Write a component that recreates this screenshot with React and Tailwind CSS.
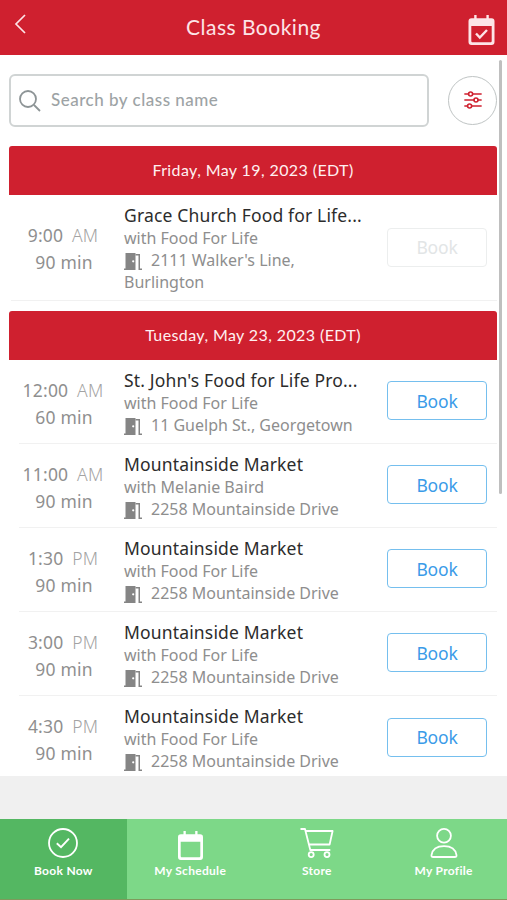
const DIAS = [
    {
        fecha: 'Friday, May 19, 2023 (EDT)',
        clases: [
            { id: 1, hora: '9:00', periodo: 'AM', duracion: '90 min', titulo: 'Grace Church Food for Life...', instructor: 'Food For Life', lugar: "2111 Walker's Line, Burlington", disponible: false },
        ],
    },
    {
        fecha: 'Tuesday, May 23, 2023 (EDT)',
        clases: [
            { id: 2, hora: '12:00', periodo: 'AM', duracion: '60 min', titulo: "St. John's Food for Life Pro...", instructor: 'Food For Life', lugar: '11 Guelph St., Georgetown', disponible: true },
            { id: 3, hora: '11:00', periodo: 'AM', duracion: '90 min', titulo: 'Mountainside Market', instructor: 'Melanie Baird', lugar: '2258 Mountainside Drive', disponible: true },
            { id: 4, hora: '1:30', periodo: 'PM', duracion: '90 min', titulo: 'Mountainside Market', instructor: 'Food For Life', lugar: '2258 Mountainside Drive', disponible: true },
            { id: 5, hora: '3:00', periodo: 'PM', duracion: '90 min', titulo: 'Mountainside Market', instructor: 'Food For Life', lugar: '2258 Mountainside Drive', disponible: true },
            { id: 6, hora: '4:30', periodo: 'PM', duracion: '90 min', titulo: 'Mountainside Market', instructor: 'Food For Life', lugar: '2258 Mountainside Drive', disponible: true },
        ],
    },
];

// --- ICONOS ---
const IconoPuerta = () => (
    <svg viewBox="0 0 18 17" className="inline-block w-[18px] h-[17px] mr-[9px] align-[-4px]" fill="#858585">
        <path fillRule="evenodd" d="M1.500 0H11.500V17H0V15.500h1.500zM9.200 7.200a1.100 1.100 0 1 0 0 2.200 1.100 1.100 0 0 0 0-2.200z" />
        <path d="M11.500 1h4.500v14.500h2V17h-3.500V2.500h-3z" />
    </svg>
);

const IconoCalendario = ({ check, className }) => (
    <svg viewBox="0 0 26 30" className={className} fill="currentColor">
        <path fillRule="evenodd" d="M5.700 0h2.400v3.300h9.800V0h2.400v3.300H23a3 3 0 0 1 3 3V27a3 3 0 0 1-3 3H3a3 3 0 0 1-3-3V6.300a3 3 0 0 1 3-3h2.700zM2.800 11v14.900c0 .8.500 1.300 1.300 1.300h17.800c.8 0 1.300-.5 1.300-1.300V11z" />
        {check && <path d="m7.500 18.500 3.800 4 7.200-7.500" fill="none" stroke="currentColor" strokeWidth="2.400" />}
    </svg>
);

const IconoFiltros = () => (
    <svg viewBox="0 0 18 18" className="w-[18px] h-[18px]" fill="none" stroke="#cf202f" strokeWidth="1.6" strokeLinecap="round">
        <path d="M.9 3h3.600M8.700 3h8.400M.9 9h9M14.200 9h2.900M.9 15h2.500M7.700 15h9.400" />
        <circle cx="6.600" cy="3" r="2" />
        <circle cx="12" cy="9" r="2" />
        <circle cx="5.600" cy="15" r="2" />
    </svg>
);

const MENU = [
    {
        nombre: 'Book Now',
        activo: true,
        icono: (
            <svg viewBox="0 0 30 30" className="w-[30px] h-[30px]" fill="none" stroke="currentColor" strokeWidth="1.8">
                <circle cx="15" cy="15" r="14" />
                <path d="m8.800 15.300 4.200 3.900 8-8.600" strokeWidth="1.900" />
            </svg>
        ),
    },
    {
        nombre: 'My Schedule',
        icono: <IconoCalendario className="w-[25px] h-[29px] mt-[3px]" />,
    },
    {
        nombre: 'Store',
        icono: (
            <svg viewBox="0 0 34 30" className="w-[34px] h-[30px]" fill="none" stroke="currentColor" strokeWidth="1.8" strokeLinejoin="round">
                <path d="M.5 1H5l5.300 21h20M5.600 3h27l-3 13.500H9" />
                <circle cx="11.200" cy="26.600" r="2.500" />
                <circle cx="27" cy="26.600" r="2.500" />
            </svg>
        ),
    },
    {
        nombre: 'My Profile',
        icono: (
            <svg viewBox="0 0 28 30" className="w-[28px] h-[30px]" fill="none" stroke="currentColor" strokeWidth="1.8" strokeLinejoin="round">
                <circle cx="14" cy="7.800" r="6.900" />
                <path d="M3.200 29C1.900 29 1.300 28.400 1.500 27.200 2.400 21.500 7 18.200 14 18.200s11.600 3.300 12.500 9c.2 1.200-.4 1.800-1.700 1.800z" />
            </svg>
        ),
    },
];

const Clase = ({ clase, ultima }) => (
    <div className={`flex pt-2 ${clase.disponible ? 'ml-[10px] h-[84.1px]' : 'ml-[2px] h-[106px]'} ${ultima ? '' : 'border-b border-[#f1f1f1]'}`}>
        {/* Horario */}
        <div className={`shrink-0 text-center text-[17.5px] leading-[27px] tracking-[0.2px] text-[#8f8f8f] ${clase.disponible ? 'w-[90px] pt-[8.5px]' : 'w-[106px] pt-[18.5px]'}`}>
            <div className="-ml-[2px] whitespace-nowrap">{clase.hora} <span className="ml-1 font-light text-[#a3a3a3]">{clase.periodo}</span></div>
            <div>{clase.duracion}</div>
        </div>

        {/* Detalle */}
        <div className={`w-[240px] shrink-0 text-[16px] leading-[22px] text-[#8e8e8e] ${clase.disponible ? 'ml-[15px]' : 'ml-[7px]'}`}>
            <h3 className="text-[17.5px] leading-[24px] tracking-[0.16px] text-[#2c2c2c] whitespace-nowrap">{clase.titulo}</h3>
            <p>with {clase.instructor}</p>
            <p className="w-[235px]"><IconoPuerta />{clase.lugar}</p>
        </div>

        <button
            disabled={!clase.disponible}
            className={`ml-[23px] h-[39px] w-[100px] shrink-0 rounded-[4px] border text-[17.5px] tracking-[-0.2px] ${clase.disponible ? 'mt-[13.2px] border-[#75bfee] text-[#3a9be8]' : 'mt-[25px] border-[#eceeee] text-[#e2e5e6]'}`}
        >
            Book
        </button>
    </div>
);

const App = () => {
    return (
        <div className="relative flex h-[900px] w-[507px] flex-col overflow-hidden bg-[#f0f0f0] font-['Noto_Sans',sans-serif]">
            {/* Encabezado */}
            <header className="flex h-[55px] shrink-0 items-center justify-between bg-[#cf202f] pl-[14px] pr-[12px] text-[#fde4e7]">
                <svg viewBox="0 0 12 20" className="mb-[7px] mr-[13px] w-[12px] h-[20px]" fill="none" stroke="currentColor" strokeWidth="1.7">
                    <path d="M11 1 2 10l9 9" />
                </svg>
                <h1 className="mb-[1px] font-['Lato',sans-serif] text-[21px] tracking-[0.5px]">Class Booking</h1>
                <IconoCalendario check className="mt-[4px] w-[27px] h-[30px]" />
            </header>

            <main className="h-[721px] shrink-0 overflow-hidden bg-white pl-[9px] pr-[10px]">
                {/* Buscador */}
                <div className="flex items-center justify-between pt-[19px]">
                    <label className="flex h-[53px] w-[420px] items-center rounded-[6px] border-2 border-[#d0d4d4] pl-[8px]">
                        <svg viewBox="0 0 22 22" className="w-[22px] h-[22px]" fill="none" stroke="#8d9496" strokeWidth="1.8">
                            <circle cx="9" cy="9" r="8" />
                            <path d="m15 15 6 6" />
                        </svg>
                        <input
                            type="text"
                            placeholder="Search by class name"
                            className="mb-[2px] ml-[10px] w-[350px] font-['Lato',sans-serif] text-[17px] font-medium tracking-[0.5px] outline-none placeholder:text-[#9da3a5]"
                        />
                    </label>
                    <button className="mb-px flex h-[49px] w-[49px] items-center justify-center rounded-full border border-[#bfc4c4]">
                        <IconoFiltros />
                    </button>
                </div>

                {/* Lista de clases por día */}
                <div className="mt-[19px] flex flex-col gap-[10px]">
                    {DIAS.map(dia => (
                        <section key={dia.fecha}>
                            <h2 className="flex h-[49px] items-center justify-center rounded-t-[3px] bg-[#cf202f] pb-[2px] font-['Lato',sans-serif] text-[16px] tracking-[0.4px] text-[#fff0f1]">
                                {dia.fecha}
                            </h2>
                            {dia.clases.map((c, i) => <Clase key={c.id} clase={c} ultima={c.disponible && i === dia.clases.length - 1} />)}
                        </section>
                    ))}
                </div>
            </main>

            {/* Barra de scroll */}
            <div className="absolute left-[499px] top-[60px] h-[434px] w-[3px] rounded-full bg-[#bfbfbf]"></div>

            {/* Menú inferior */}
            <nav className="mt-auto grid h-[81px] shrink-0 grid-cols-4 border-b border-[#7f9a5c] bg-[#7dd888] text-white">
                {MENU.map(item => (
                    <a key={item.nombre} className={`flex flex-col items-center pt-[9px] ${item.activo ? 'bg-[#54b762]' : ''}`}>
                        <span className="flex h-[32px] items-start">{item.icono}</span>
                        <span className="mt-[3px] font-['Lato',sans-serif] text-[12px] font-bold leading-[16px] tracking-[0.3px]">{item.nombre}</span>
                    </a>
                ))}
            </nav>
        </div>
    );
};

export default App;
